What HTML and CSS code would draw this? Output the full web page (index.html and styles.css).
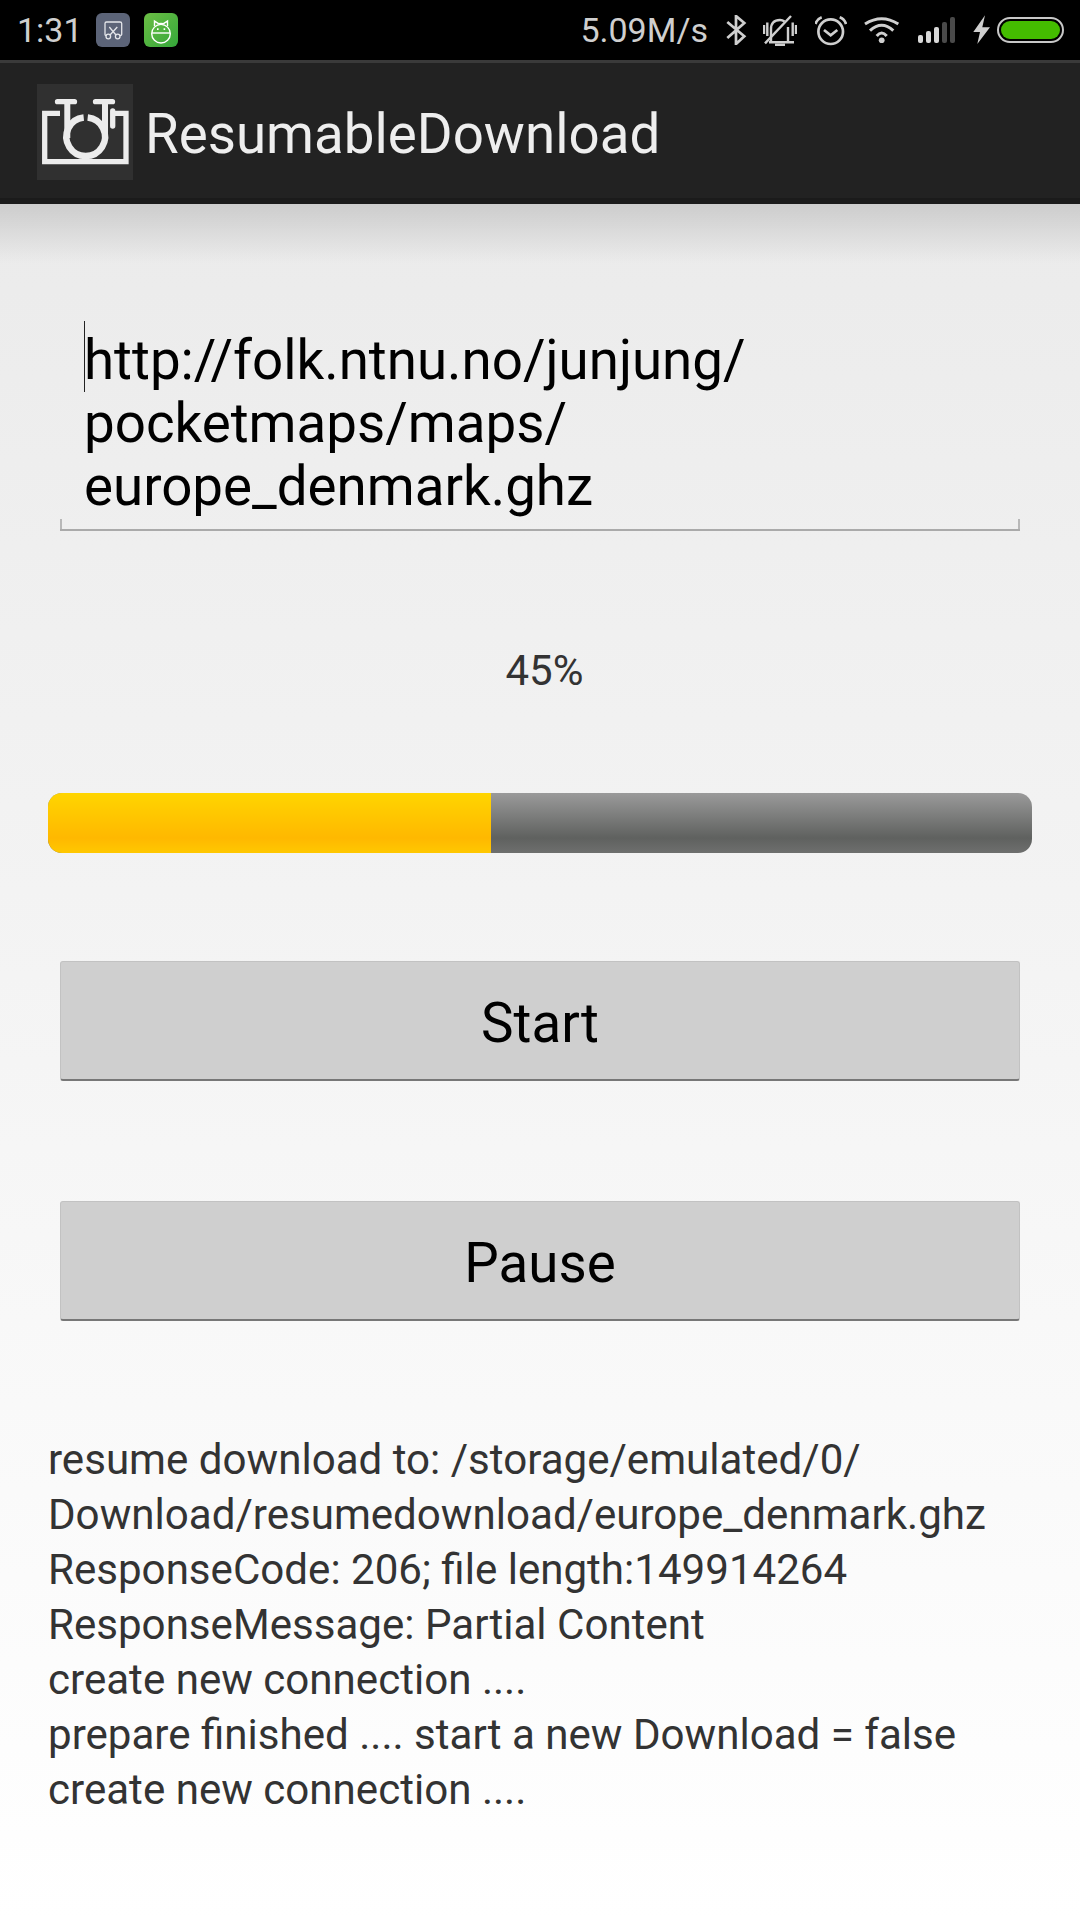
FILE: index.html
```html
<!DOCTYPE html>
<html>
<head>
    <meta charset="UTF-8">
    <meta name="viewport" content="width=device-width, initial-scale=1.0">
    <title>ResumableDownload</title>
    <link rel="stylesheet" href="styles.css">
</head>
<body>
    <div class="status-bar">
        <div class="status-left">
            <span class="clock">1:31</span>
            <span class="notif notif-gray">
                <svg viewBox="0 0 34 34" width="34" height="34" fill="none" stroke="#e4e6ea" stroke-width="1.3">
                    <path d="M10.500 22.500H10Q9 22.500 9 21.500V10.500Q9 9 10.500 9H24Q25.700 9 25.700 10.500V21.500Q25.700 22.500 24 22.500"/>
                    <circle cx="12.300" cy="23.500" r="2.300"/>
                    <circle cx="21.700" cy="23.500" r="2.300"/>
                    <path d="M13.300 14L20 22M21.300 14L14 22"/>
                </svg>
            </span>
            <span class="notif notif-green">
                <svg viewBox="0 0 34 34" width="34" height="34" fill="none" stroke="#fff" stroke-width="1.4">
                    <path d="M10.500 13L10.500 8L14.500 10.700Q17 10 19.500 10.700L23.500 8L23.500 13"/>
                    <circle cx="17" cy="20.700" r="9.300"/>
                    <path d="M8 20H26"/>
                    <path d="M13 16.200h1.600M19.600 16.200h1.600" stroke-width="1.800"/>
                </svg>
            </span>
        </div>
        <div class="status-right">
            <span class="speed">5.09M/s</span>
            <!-- bluetooth -->
            <svg class="bt" viewBox="0 0 22 30" width="22" height="30" fill="none" stroke="#cfcfcf" stroke-width="2.700">
                <path d="M1.300 7L18.300 21.300L10 29V1L18.300 8L1.300 23"/>
            </svg>
            <!-- muted bell -->
            <svg class="bell" viewBox="0 -1 34 32" width="34" height="32" fill="none" stroke="#cfcfcf" stroke-width="2.400">
                <path d="M8 26V14Q8 5 17 5Q19.500 5 21.500 6.500M25 12V26"/>
                <path d="M6 27.300H31M12 30H22M1 10V19M4.300 7.500V21M33 10V19M29.700 7.500V21"/>
                <path d="M28 1L2 28.300"/>
            </svg>
            <!-- alarm -->
            <svg class="alarm" viewBox="0 -1 32 32" width="32" height="32" fill="none" stroke="#cfcfcf" stroke-width="2.700">
                <circle cx="15.700" cy="16.700" r="12.300"/>
                <path d="M9 15L15.700 20.300L22.300 15"/>
                <path d="M0.500 9Q2 4 6.700 2.300M31 9Q29.500 4 24.700 2.300"/>
            </svg>
            <!-- wifi -->
            <svg class="wifi" viewBox="0 0 36 26" width="36" height="26" fill="none" stroke="#cfcfcf" stroke-width="3">
                <path d="M1 7Q17.700 -3.600 34.300 7M6 13.700Q17.700 2.900 29.300 13.700M12.700 19Q17.700 13 22.700 19"/>
                <circle cx="17.700" cy="23.300" r="2.900" fill="#cfcfcf" stroke="none"/>
            </svg>
            <div class="signal">
                <i class="bar bar-1"></i>
                <i class="bar bar-2"></i>
                <i class="bar bar-3"></i>
                <i class="bar bar-4 off"></i>
                <i class="bar bar-5 off"></i>
            </div>
            <svg class="bolt" viewBox="0 0 18 30" width="18" height="30" fill="#cfcfcf">
                <path d="M12 0.300L0.300 17H7L4.300 29L17 12.300H9.300Z"/>
            </svg>
            <div class="battery"><div class="battery-fill"></div></div>
        </div>
    </div>

    <div class="action-bar">
        <div class="app-icon">
            <svg viewBox="0 0 96 96" width="96" height="96" fill="none" stroke="#ececec" stroke-width="5.300">
                <path d="M23 29.400H7.700V77.600H89V29.400H76"/>
                <path d="M46.700 33.500A19.300 19.300 0 1 0 50.700 33.500" stroke-width="6.500"/>
                <path d="M30.300 17.700V54M68 17.700V54" stroke-width="6"/>
                <path d="M20.500 17.700H37.500M58.500 17.700H75.500" stroke-linecap="round"/>
                <path d="M75.700 27V42" stroke-linecap="round"/>
            </svg>
        </div>
        <span class="app-title">ResumableDownload</span>
    </div>

    <div class="content">
        <div class="url-field">
            <div class="url-text"><span class="caret"></span>http://folk.ntnu.no/junjung/<br>pocketmaps/maps/<br>europe_denmark.ghz</div>
        </div>

        <div class="percent">45%</div>

        <div class="progress">
            <div class="progress-fill" style="width: 45%"></div>
        </div>

        <div class="btn">Start</div>
        <div class="btn">Pause</div>

        <div class="log">
            <div>resume download to: /storage/emulated/0/</div>
            <div>Download/resumedownload/europe_denmark.ghz</div>
            <div>ResponseCode: 206; file length:149914264</div>
            <div>ResponseMessage: Partial Content</div>
            <div>create new connection ....</div>
            <div>prepare finished .... start a new Download = false</div>
            <div>create new connection ....</div>
        </div>
    </div>
</body>
</html>
```

FILE: styles.css
```css
* {
    margin: 0;
    padding: 0;
    box-sizing: border-box;
}

html, body {
    height: 100%;
    overflow: hidden;
}

body {
    width: 1080px;
    height: 1920px;
    font-family: Roboto, "Liberation Sans", sans-serif;
    display: flex;
    flex-direction: column;
    background-color: #fff;
}

.status-bar {
    height: 60px;
    background-color: #000;
    color: #cfcfcf;
    display: flex;
    justify-content: space-between;
    align-items: center;
    padding: 0 16px 0 17px;
    font-size: 34px;
}

.status-left {
    display: flex;
    align-items: center;
}

.clock {
    width: 79px;
}

.notif {
    width: 34px;
    height: 34px;
    border-radius: 6px;
    display: block;
}

.notif svg {
    display: block;
}

.notif-gray {
    background-color: #5c6478;
    margin-right: 14px;
}

.notif-green {
    background: linear-gradient(135deg, #6cbe45, #34a73a);
}

.status-right {
    display: flex;
    align-items: center;
}

.speed {
    margin-right: 18px;
}

.bt {
    margin-right: 15px;
}

.bell {
    margin-right: 18px;
}

.alarm {
    margin-right: 17px;
}

.wifi {
    margin-right: 18px;
}

.signal {
    display: flex;
    align-items: flex-end;
    gap: 3px;
    height: 26px;
    margin-right: 18px;
}

.bar {
    display: block;
    width: 5px;
    background-color: #d8d8d8;
    border-radius: 2px;
}

.bar.off {
    background-color: #4a4a4a;
}

.bar-1 { height: 8px; }
.bar-2 { height: 12px; }
.bar-3 { height: 16px; }
.bar-4 { height: 21px; }
.bar-5 { height: 26px; }

.bolt {
    margin-right: 6px;
}

.battery {
    width: 67px;
    height: 26px;
    border: 2px solid #c8c8c8;
    border-radius: 13px;
    padding: 2px;
}

.battery-fill {
    height: 100%;
    background-color: #44bd00;
    border-radius: 9px;
}

.action-bar {
    height: 144px;
    background-color: #222;
    border-top: 3px solid #3a3a3a;
    border-bottom: 6px solid #1b1b1b;
    display: flex;
    align-items: center;
    padding-left: 37px;
}

.app-icon {
    width: 96px;
    height: 96px;
    background-color: #303030;
    margin: 3px 12px 0 0;
}

.app-icon svg {
    display: block;
}

.app-title {
    color: #eee;
    font-size: 54.7px;
    margin-top: 7px;
}

.content {
    flex: 1;
    background:
        linear-gradient(rgba(0, 0, 0, 0.13), rgba(0, 0, 0, 0) 60px),
        linear-gradient(#ebebeb, #fff);
    padding: 113px 48px 0;
    display: flex;
    flex-direction: column;
}

.url-field {
    margin: 0 12px;
    height: 214px;
    padding: 12px 0 0 24px;
    border-bottom: 2px solid #aaa;
    background:
        linear-gradient(#b8b8b8, #b8b8b8) left bottom / 2px 10px no-repeat,
        linear-gradient(#b8b8b8, #b8b8b8) right bottom / 2px 10px no-repeat;
}

.url-text {
    font-size: 54.7px;
    line-height: 63px;
    color: #000;
    position: relative;
}

.caret {
    position: absolute;
    left: 0;
    top: -8px;
    width: 1px;
    height: 71px;
    background-color: #222;
}

.percent {
    margin-top: 115px;
    padding-left: 9px;
    text-align: center;
    font-size: 42px;
    line-height: 50px;
    color: #333;
}

.progress {
    margin-top: 97px;
    height: 60px;
    border-radius: 14px;
    overflow: hidden;
    background: linear-gradient(#9a9a9a, #5f615f 75%, #6e6f6e);
}

.progress-fill {
    height: 100%;
    background: linear-gradient(#ffd500, #ffb800 75%, #ffc800);
}

.btn {
    margin: 108px 12px 0;
    height: 120px;
    padding-top: 4px;
    background-color: #cfcfcf;
    border-radius: 3px;
    border: 1px solid #c2c2c2;
    border-bottom: 2px solid #777;
    display: flex;
    justify-content: center;
    align-items: center;
    font-size: 54.7px;
    color: #000;
}

.btn + .btn {
    margin-top: 120px;
}

.log {
    margin-top: 111px;
    font-size: 42.1px;
    line-height: 55px;
    color: #333;
}
```
